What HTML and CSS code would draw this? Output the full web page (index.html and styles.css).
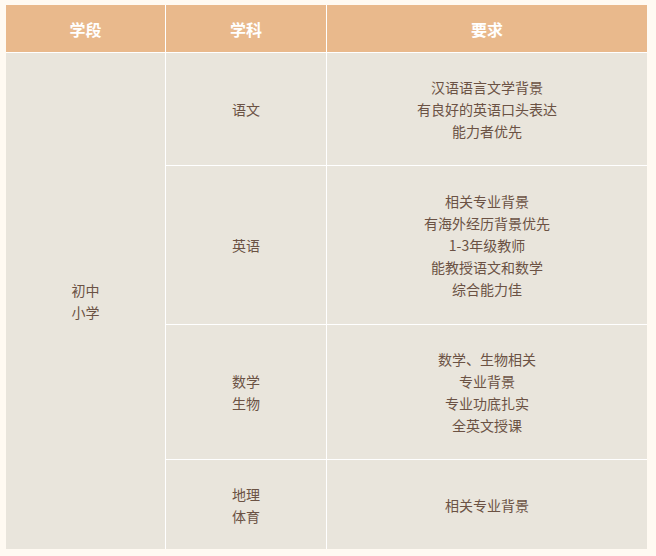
FILE: index.html
```html
<!DOCTYPE html>
<html lang="zh-CN">
<head>
<meta charset="utf-8">
<title>招聘要求</title>
<link rel="stylesheet" href="styles.css">
</head>
<body>
<div class="table">
  <div class="cell head">学段</div>
  <div class="cell head">学科</div>
  <div class="cell head">要求</div>

  <div class="cell stage">初中<br>小学</div>

  <div class="cell">语文</div>
  <div class="cell">汉语语言文学背景<br>有良好的英语口头表达<br>能力者优先</div>

  <div class="cell">英语</div>
  <div class="cell">相关专业背景<br>有海外经历背景优先<br>1-3年级教师<br>能教授语文和数学<br>综合能力佳</div>

  <div class="cell">数学<br>生物</div>
  <div class="cell">数学、生物相关<br>专业背景<br>专业功底扎实<br>全英文授课</div>

  <div class="cell">地理<br>体育</div>
  <div class="cell">相关专业背景</div>
</div>
</body>
</html>
```

FILE: styles.css
```css
html, body {
  margin: 0;
  padding: 0;
  background: #fffaf2;
}
body {
  padding: 5px 6px;
  font-family: "Noto Sans CJK SC", "Microsoft YaHei", sans-serif;
}
.table {
  display: grid;
  width: 641px;
  grid-template-columns: 159px 160px 320px;
  grid-template-rows: 47px 112px 158px 134px 89px;
  gap: 1px;
  background: #ffffff;
}
.cell {
  background: #e9e5dc;
  color: #6b5244;
  font-size: 14px;
  line-height: 22px;
  display: flex;
  align-items: center;
  justify-content: center;
  text-align: center;
}
.head {
  background: #e9b98c;
  color: #ffffff;
  font-size: 16px;
  font-weight: bold;
}
.stage {
  grid-row: 2 / 6;
}
```
